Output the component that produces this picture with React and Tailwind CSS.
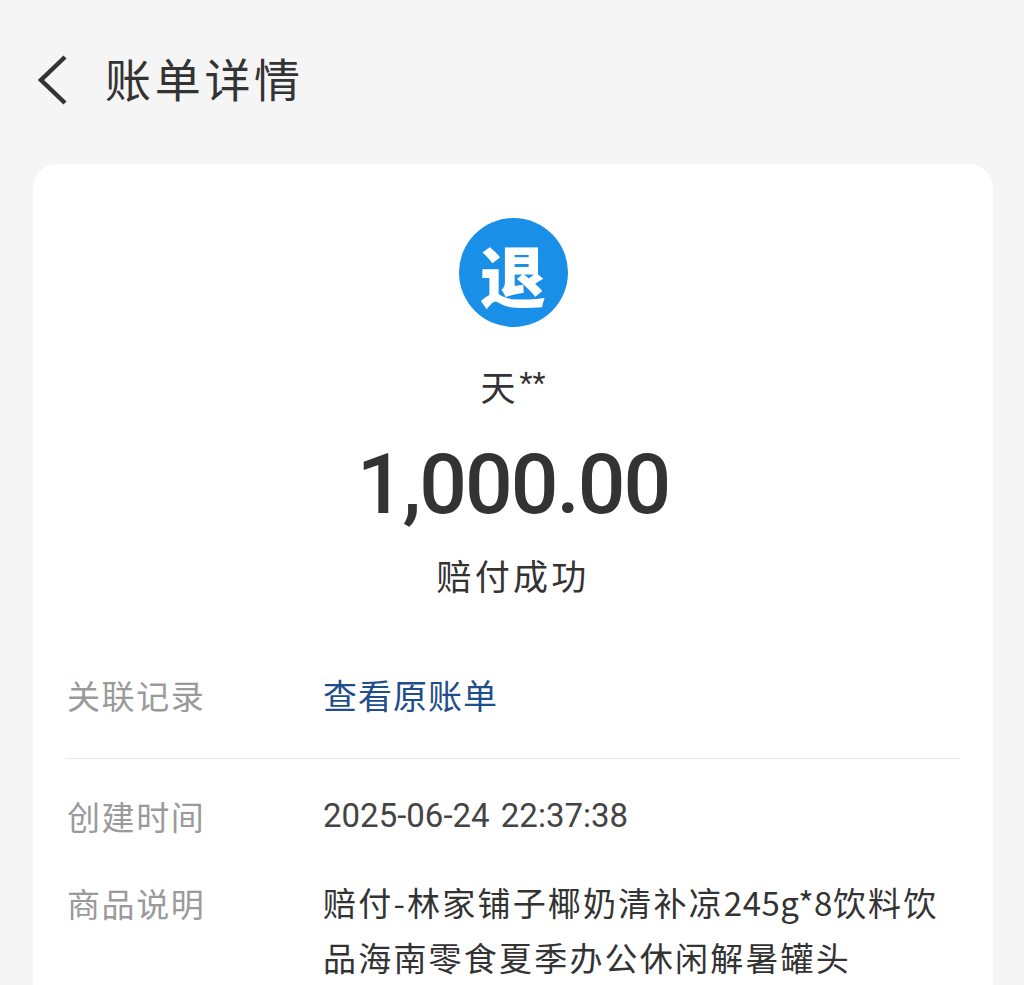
const cjk = { fontFamily: '"Noto Sans CJK SC", sans-serif' };

function Row({ label, children, className = '' }) {
  return (
    <div className={`flex ${className}`}>
      <div className="w-[257px] shrink-0 pl-[1px] text-[33px] leading-[48px] tracking-[1.6px] text-[#9a9a9a]">{label}</div>
      <div className="flex-1">{children}</div>
    </div>
  );
}

export default function App() {
  return (
    <div className="h-[985px] overflow-hidden bg-[#f5f5f5]" style={cjk}>
      <div className="flex h-[164px] items-start pl-[37px] pt-[54px]">
        <svg width="30" height="52" viewBox="0 0 30 52" fill="none" stroke="#333" strokeWidth="4.5">
          <path d="M28 3 L4 26 L28 49" />
        </svg>
        <h1 className="ml-[38px] -mt-[7px] text-[46px] leading-[60px] tracking-[3.7px] text-[#333]">账单详情</h1>
      </div>

      <div className="ml-[33px] mr-[31px] h-[900px] rounded-[24px] bg-white px-[33px] pt-[54px]">
        <div className="flex flex-col items-center">
          <div className="flex h-[109px] w-[109px] items-center justify-center rounded-full bg-[#1a8fe8] text-[66px] font-black leading-none text-white">退</div>
          <div className="mt-[34px] flex items-start text-[#333]">
            <span className="text-[35px] leading-[50px]">天</span>
            <span className="ml-[4px] text-[30px] leading-[44px]" style={{ fontFamily: 'Roboto, sans-serif' }}>**</span>
          </div>
          <div className="mt-[24px] text-[84px] font-medium leading-[100px] tracking-[-2px] text-[#333]" style={{ fontFamily: 'Roboto, sans-serif' }}>1,000.00</div>
          <div className="mt-[15px] text-[35px] leading-[50px] tracking-[3.3px] text-[#333]">赔付成功</div>
        </div>

        <div className="mt-[71px] border-b border-[#e8e8e8] pb-[39px]">
          <Row label="关联记录">
            <span className="text-[34px] leading-[48px] tracking-[1px] text-[#1f4e8c]">查看原账单</span>
          </Row>
        </div>

        <Row label="创建时间" className="mt-[33px]">
          <span className="text-[33px] leading-[48px] text-[#444] [word-spacing:3px]" style={{ fontFamily: 'Roboto, sans-serif' }}>2025-06-24 22:37:38</span>
        </Row>

        <Row label="商品说明" className="mt-[39px]">
          <div className="-mt-[4px] text-[33px] leading-[55px] tracking-[2.2px] text-[#333]">
            <div className="whitespace-nowrap">赔付-林家铺子椰奶清补凉<span className="tracking-[0.5px]">245g*8</span>饮料饮</div>
            <div className="whitespace-nowrap">品海南零食夏季办公休闲解暑罐头</div>
          </div>
        </Row>
      </div>
    </div>
  );
}
